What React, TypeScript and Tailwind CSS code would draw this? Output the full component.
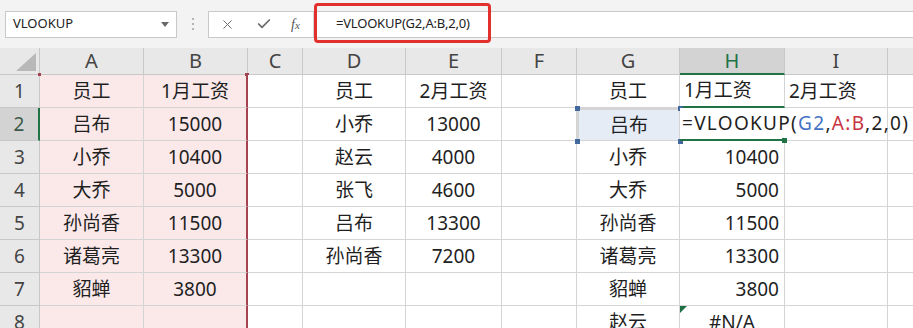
import { X, Check } from "lucide-react";

const colWidths = "grid-cols-[40px_104px_104px_55px_103px_96px_75px_103px_105px_103px_100px]";
const letters = ["A", "B", "C", "D", "E", "F", "G", "H", "I", "J"];

type Align = "center" | "left" | "right";

// A..J per row, "" for empty
const rows: string[][] = [
  ["员工", "1月工资", "", "员工", "2月工资", "", "员工", "1月工资", "2月工资", ""],
  ["吕布", "15000", "", "小乔", "13000", "", "吕布", "", "", ""],
  ["小乔", "10400", "", "赵云", "4000", "", "小乔", "10400", "", ""],
  ["大乔", "5000", "", "张飞", "4600", "", "大乔", "5000", "", ""],
  ["孙尚香", "11500", "", "吕布", "13300", "", "孙尚香", "11500", "", ""],
  ["诸葛亮", "13300", "", "孙尚香", "7200", "", "诸葛亮", "13300", "", ""],
  ["貂蝉", "3800", "", "", "", "", "貂蝉", "3800", "", ""],
  ["", "", "", "", "", "", "赵云", "#N/A", "", ""],
];

function alignFor(col: number, row: number): Align {
  if (col === 7) return row === 0 ? "left" : row === 7 ? "center" : "right";
  if (col === 8) return "left";
  return "center";
}

const justify: Record<Align, string> = {
  center: "justify-center",
  left: "justify-start pl-[4px]",
  right: "justify-end pr-[5px]",
};

function Formula() {
  return (
    <span className="whitespace-nowrap tracking-[1.3px]">
      =VLOOKUP(<span className="text-[#4472c4]">G2</span>,<span className="text-[#c8333f]">A:B</span>,2,0)
    </span>
  );
}

function Cell({ row, col }: { row: number; col: number }) {
  const text = rows[row][col];
  const pink = col <= 1;
  const base =
    "relative h-[33px] flex items-center border-r border-b border-[#d4d4d4] text-[19px] text-[#1f1f1f]";

  // G2: referenced cell, blue outline
  if (row === 1 && col === 6) {
    return (
      <div className={`${base} justify-center bg-[#e6ecf6] border-2 border-[#41699e] z-10`}>
        {text}
        <span className="absolute -left-[4px] -top-[4px] w-[5px] h-[5px] bg-[#41699e]" />
        <span className="absolute -right-[4px] -top-[4px] w-[5px] h-[5px] bg-[#41699e]" />
        <span className="absolute -left-[4px] -bottom-[4px] w-[5px] h-[5px] bg-[#41699e]" />
        <span className="absolute -right-[4px] -bottom-[4px] w-[5px] h-[5px] bg-[#41699e]" />
      </div>
    );
  }

  // H2: active cell in edit mode, text runs over I2
  if (row === 1 && col === 7) {
    return (
      <div className={`${base} justify-start pl-[2px] bg-white border-l-0 border-b-2 border-b-[#217346] border-r-transparent z-20`}>
        <Formula />
        <span className="absolute -right-[3px] -bottom-[4px] w-[5px] h-[5px] bg-[#217346]" />
      </div>
    );
  }

  let extra = "";
  if (pink) extra += " bg-[#fbe9ea]";
  else extra += " bg-white";
  if (col === 1) extra += " border-r-2 border-r-[#a4424f]";
  if (row === 0 && col === 7) extra += " border-b-2 border-b-[#217346]";
  if (row === 1 && col === 8) extra += " border-l-0";

  return (
    <div className={`${base} ${justify[alignFor(col, row)]}${extra}`}>
      {text}
      {row === 0 && col === 0 && (
        <span className="absolute -left-[2px] -top-[2px] w-[3px] h-[3px] bg-[#a4424f]" />
      )}
      {row === 0 && col === 1 && (
        <span className="absolute -right-[3px] -top-[2px] w-[4px] h-[3px] bg-[#a4424f]" />
      )}
      {row === 7 && col === 7 && (
        <svg className="absolute left-0 top-0" width="7" height="7" viewBox="0 0 7 7">
          <polygon points="0,0 7,0 0,7" fill="#1e7145" />
        </svg>
      )}
    </div>
  );
}

export default function App() {
  return (
    <div
      className="w-[913px] h-[328px] overflow-hidden bg-white"
      style={{ fontFamily: '"Noto Sans", "Noto Sans CJK SC", sans-serif' }}
    >
      {/* formula bar */}
      <div className="h-[48px] bg-[#f3f3f3] flex items-center">
        <div className="ml-[5px] w-[172px] h-[27px] bg-white border border-[#c9c9c9] flex items-center justify-between pl-[7px] pr-[7px]">
          <span className="text-[13px] text-[#222]">VLOOKUP</span>
          <svg width="8" height="5" viewBox="0 0 8 5">
            <polygon points="0,0 8,0 4,5" fill="#6a6a6a" />
          </svg>
        </div>
        <div className="w-[31px] flex flex-col items-center gap-[3px]">
          <span className="w-[2px] h-[2px] bg-[#b5b5b5]" />
          <span className="w-[2px] h-[2px] bg-[#b5b5b5]" />
          <span className="w-[2px] h-[2px] bg-[#b5b5b5]" />
        </div>
        <div className="flex-1 h-[27px] bg-white border border-r-0 border-[#c9c9c9] flex items-center">
          <div className="w-[104px] h-full flex items-center text-[#6b6b6b]">
            <X size={15} strokeWidth={1.6} className="ml-[11px]" />
            <Check size={16} strokeWidth={2.6} className="ml-[21px]" />
            <span
              className="ml-[19px] text-[14px] italic text-[#555]"
              style={{ fontFamily: '"Liberation Serif", serif' }}
            >
              f<span className="text-[11px]">x</span>
            </span>
          </div>
          <div className="relative flex-1 h-full flex items-center pl-[22px] border-l border-[#d4d4d4]">
            <span className="text-[13px] text-[#222] tracking-[-0.2px]">=VLOOKUP(G2,A:B,2,0)</span>
            <div className="absolute left-0 -top-[9px] w-[177px] h-[40px] border-[3px] border-[#e2312d] rounded-[4px]" />
          </div>
        </div>
      </div>

      {/* sheet */}
      <div className={`grid ${colWidths}`}>
        <div className="relative h-[27px] bg-[#e8e8e8] border-r border-b border-[#c8c8c8]">
          <svg className="absolute right-[3px] bottom-[3px]" width="20" height="18" viewBox="0 0 20 18">
            <polygon points="20,0 20,18 0,18" fill="#b8b8b8" />
          </svg>
        </div>
        {letters.map((l) => (
          <div
            key={l}
            className={
              l === "H"
                ? "h-[27px] flex items-center justify-center bg-[#d3d3d3] border-r border-[#c8c8c8] border-b-2 border-b-[#217346] text-[20px] text-[#217346]"
                : "h-[27px] flex items-center justify-center bg-[#e8e8e8] border-r border-b border-[#c8c8c8] text-[20px] text-[#444]"
            }
          >
            {l}
          </div>
        ))}
        {rows.map((r, ri) => [
          <div
            key={`h${ri}`}
            className={
              ri === 1
                ? "h-[33px] flex items-center justify-center bg-[#d3d3d3] border-b border-[#c8c8c8] border-r-2 border-r-[#217346] text-[19px] text-[#3b5a48]"
                : "h-[33px] flex items-center justify-center bg-[#e8e8e8] border-b border-r border-[#c8c8c8] text-[19px] text-[#444]"
            }
          >
            {ri + 1}
          </div>,
          ...r.map((_, ci) => <Cell key={`${ri}-${ci}`} row={ri} col={ci} />),
        ])}
      </div>
    </div>
  );
}
